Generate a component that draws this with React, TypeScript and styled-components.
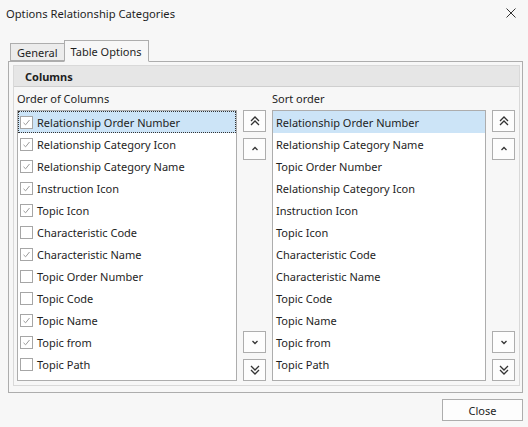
import React from 'react';
import styled, { createGlobalStyle } from 'styled-components';

const GlobalStyle = createGlobalStyle`
  html, body {
    margin: 0;
    padding: 0;
    background: #f7f7f7;
  }
  body {
    font-family: 'Noto Sans', 'Open Sans', sans-serif;
    font-size: 11px;
    color: #1e1e1e;
  }
`;

const Dialog = styled.div`
  width: 528px;
  height: 427px;
  box-sizing: border-box;
  display: flex;
  flex-direction: column;
  background: #f7f7f7;
`;

const TitleBar = styled.div`
  height: 26px;
  display: flex;
  align-items: center;
  justify-content: space-between;
  padding: 0 12px 0 6px;
  font-size: 11.2px;
`;

const CloseX = styled.div`
  width: 10px;
  height: 10px;
  display: flex;
`;

const TabStrip = styled.div`
  display: flex;
  align-items: flex-end;
  height: 21px;
  margin: 14px 0 0 10px;
  position: relative;
  z-index: 1;
`;

const Tab = styled.div<{ $active?: boolean }>`
  box-sizing: border-box;
  display: flex;
  align-items: center;
  padding: 0 6px;
  border: 1px solid #adadad;
  border-bottom: ${(p) => (p.$active ? '1px solid #f7f7f7' : '1px solid #adadad')};
  background: ${(p) => (p.$active ? '#f7f7f7' : '#ececec')};
  height: ${(p) => (p.$active ? '22px' : '18px')};
  margin-bottom: ${(p) => (p.$active ? '-1px' : '0')};
  ${(p) => (!p.$active ? 'border-right: none;' : '')}
`;

const Panel = styled.div`
  margin: 0 5px 0 8px;
  border: 1px solid #adadad;
  padding: 3px 2px 6px 4px;
  background: #f7f7f7;
`;

const Group = styled.div`
  border: 1px solid #d9d9d9;
  display: flex;
  flex-direction: column;
`;

const GroupHeader = styled.div`
  height: 20px;
  background: #e6e6e6;
  border-bottom: 1px solid #cfcfcf;
  display: flex;
  align-items: center;
  padding-left: 11px;
  font-weight: bold;
`;

const GroupBody = styled.div`
  display: grid;
  grid-template-columns: 220px 23px 214px 23px;
  grid-template-rows: 23px 271px;
  column-gap: 6px;
  padding: 0 5px 4px 3px;
`;

const Label = styled.div`
  display: flex;
  align-items: center;
  padding-bottom: 1px;
`;

const ListBox = styled.div`
  box-sizing: border-box;
  border: 1px solid #adadad;
  background: #ffffff;
  display: flex;
  flex-direction: column;
`;

const Row = styled.div<{ $selected?: boolean; $focus?: boolean }>`
  box-sizing: border-box;
  height: 22px;
  display: flex;
  align-items: center;
  gap: 4px;
  padding-left: 2px;
  background: ${(p) => (p.$selected ? '#cce4f7' : 'transparent')};
  border: 1px ${(p) => (p.$focus ? 'dotted #333' : 'solid transparent')};
`;

const CheckBox = styled.span`
  box-sizing: border-box;
  width: 13px;
  height: 13px;
  margin-left: -1px;
  border: 1px solid #a6a6a6;
  background: #fff;
  display: flex;
  align-items: center;
  justify-content: center;
`;

const ButtonColumn = styled.div`
  display: flex;
  flex-direction: column;
  justify-content: space-between;
`;

const ButtonPair = styled.div`
  display: flex;
  flex-direction: column;
  gap: 6px;
`;

const MoveButton = styled.button`
  box-sizing: border-box;
  width: 23px;
  height: 22px;
  padding: 0;
  border: 1px solid #adadad;
  background: #fdfdfd;
  display: flex;
  align-items: center;
  justify-content: center;
`;

const Footer = styled.div`
  display: flex;
  justify-content: flex-end;
  padding: 6px 5px 0 0;
`;

const CloseButton = styled.button`
  box-sizing: border-box;
  width: 81px;
  height: 22px;
  border: 1px solid #adadad;
  background: #fdfdfd;
  font-family: inherit;
  font-size: 11px;
  color: #1e1e1e;
`;

type Dir = 'top' | 'up' | 'down' | 'bottom';

const Arrow = ({ dir }: { dir: Dir }) => {
  const single = 'M2.5 6 L5 3.5 L7.5 6';
  const doubleUp = 'M1 5 L5 1 L9 5 M1 9 L5 5 L9 9';
  const flip = dir === 'down' || dir === 'bottom';
  return (
    <svg width="10" height="10" viewBox="0 0 10 10" style={{ transform: flip ? 'scaleY(-1)' : undefined }}>
      <path
        d={dir === 'top' || dir === 'bottom' ? doubleUp : single}
        fill="none"
        stroke="#333"
        strokeWidth="1.3"
      />
    </svg>
  );
};

const Buttons = () => (
  <ButtonColumn>
    <ButtonPair>
      <MoveButton><Arrow dir="top" /></MoveButton>
      <MoveButton><Arrow dir="up" /></MoveButton>
    </ButtonPair>
    <ButtonPair>
      <MoveButton><Arrow dir="down" /></MoveButton>
      <MoveButton><Arrow dir="bottom" /></MoveButton>
    </ButtonPair>
  </ButtonColumn>
);

const columns: { name: string; checked: boolean }[] = [
  { name: 'Relationship Order Number', checked: true },
  { name: 'Relationship Category Icon', checked: true },
  { name: 'Relationship Category Name', checked: true },
  { name: 'Instruction Icon', checked: true },
  { name: 'Topic Icon', checked: true },
  { name: 'Characteristic Code', checked: false },
  { name: 'Characteristic Name', checked: true },
  { name: 'Topic Order Number', checked: false },
  { name: 'Topic Code', checked: false },
  { name: 'Topic Name', checked: true },
  { name: 'Topic from', checked: true },
  { name: 'Topic Path', checked: false },
];

const sortOrder = [
  'Relationship Order Number',
  'Relationship Category Name',
  'Topic Order Number',
  'Relationship Category Icon',
  'Instruction Icon',
  'Topic Icon',
  'Characteristic Code',
  'Characteristic Name',
  'Topic Code',
  'Topic Name',
  'Topic from',
  'Topic Path',
];

const Check = () => (
  <svg width="9" height="9" viewBox="0 0 9 9">
    <path d="M1.5 4.8 L3.6 6.8 L7.5 2" fill="none" stroke="#9a9a9a" strokeWidth="1" />
  </svg>
);

export default function App() {
  return (
    <Dialog>
      <GlobalStyle />
      <TitleBar>
        <span>Options Relationship Categories</span>
        <CloseX>
          <svg width="10" height="10" viewBox="0 0 10 10">
            <path d="M0.5 0.5 L9.5 9.5 M9.5 0.5 L0.5 9.5" stroke="#333" strokeWidth="1" />
          </svg>
        </CloseX>
      </TitleBar>
      <TabStrip>
        <Tab>General</Tab>
        <Tab $active>Table Options</Tab>
      </TabStrip>
      <Panel>
        <Group>
          <GroupHeader>Columns</GroupHeader>
          <GroupBody>
            <Label>Order of Columns</Label>
            <span />
            <Label>Sort order</Label>
            <span />
            <ListBox>
              {columns.map((c, i) => (
                <Row key={c.name} $selected={i === 0} $focus={i === 0}>
                  <CheckBox>{c.checked && <Check />}</CheckBox>
                  {c.name}
                </Row>
              ))}
            </ListBox>
            <Buttons />
            <ListBox>
              {sortOrder.map((s, i) => (
                <Row key={s} $selected={i === 0}>{s}</Row>
              ))}
            </ListBox>
            <Buttons />
          </GroupBody>
        </Group>
      </Panel>
      <Footer>
        <CloseButton>Close</CloseButton>
      </Footer>
    </Dialog>
  );
}
